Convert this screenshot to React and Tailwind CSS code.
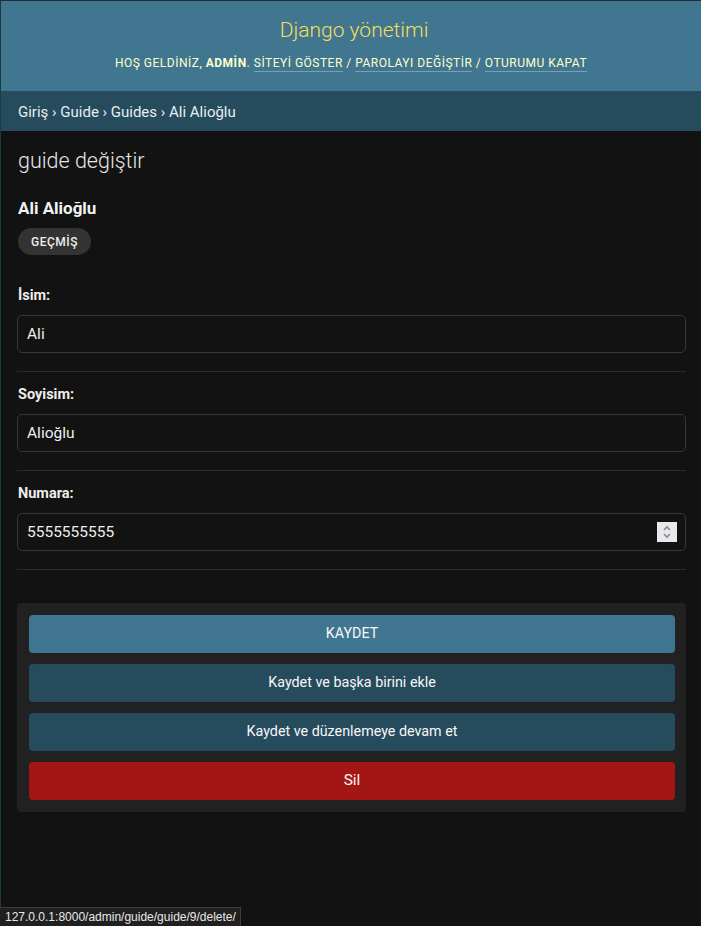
import { useState } from 'react';

const fields = [
  { label: 'İsim:', value: 'Ali' },
  { label: 'Soyisim:', value: 'Alioğlu' },
  { label: 'Numara:', value: '5555555555', number: true },
];

function Spinner() {
  return (
    <span className="absolute right-[9px] top-[9px] flex h-[20px] w-[20px] flex-col items-center justify-center bg-[#e9e9ed]">
      <svg width="10" height="16" viewBox="0 0 10 16" fill="none" stroke="#8a8a8a" strokeWidth="1.6">
        <path d="M2 6 L5 3 L8 6" />
        <path d="M2 10 L5 13 L8 10" />
      </svg>
    </span>
  );
}

function Field({ label, value, number }) {
  const [val, setVal] = useState(value);
  return (
    <div className="border-b border-[#2a2a2a] pt-[14px] pb-[18px]">
      <label className="block pl-[1px] text-[14.5px] font-bold leading-[17px] text-[#eeeeee]">{label}</label>
      <div className="relative mt-[11px]">
        <input
          value={val}
          onChange={(e) => setVal(e.target.value)}
          className="block h-[38px] w-full rounded-[5px] border border-[#363636] bg-[#121212] px-[9px] text-[15.5px] text-[#eeeeee] outline-none"
        />
        {number && <Spinner />}
      </div>
    </div>
  );
}

export default function App() {
  return (
    <div
      className="min-h-[926px] w-full border-l border-[#1d3a40] bg-[#121212] text-[#eeeeee]"
      style={{ fontFamily: 'Roboto, "Liberation Sans", sans-serif' }}
    >
      {/* Header */}
      <header className="flex h-[91px] flex-col items-center border-t border-[#1c2d36] bg-[#417690] pt-[16px]">
        <div className="pl-[6px] text-[21px] font-light leading-[26px] text-[#f5dd5d]">Django yönetimi</div>
        <div className="mt-[12px] text-[12px] tracking-[0.5px] leading-[16px] text-[#ffffcc]">
          HOŞ GELDİNİZ, <strong className="font-bold">ADMİN</strong>.{' '}
          <a className="border-b border-white/30 pb-[1px]">SİTEYİ GÖSTER</a> /{' '}
          <a className="border-b border-white/30 pb-[1px]">PAROLAYI DEĞİŞTİR</a> /{' '}
          <a className="border-b border-white/30 pb-[1px]">OTURUMU KAPAT</a>
        </div>
      </header>

      {/* Breadcrumbs */}
      <nav className="flex h-[40px] items-center bg-[#264b5d] px-[17px] pt-[2px] text-[15px] text-[#e6eef2]">
        Giriş › Guide › Guides › Ali Alioğlu
      </nav>

      {/* Content */}
      <main className="pl-[16px] pr-[15px] pt-[17px]">
        <div className="pl-[1px]">
          <h1 className="text-[21.5px] font-light leading-[26px] text-[#e6e6e6]">guide değiştir</h1>
          <h2 className="mt-[24px] text-[17px] font-bold leading-[20px] text-[#f2f2f2]">Ali Alioğlu</h2>
          <button className="mt-[10px] h-[27px] rounded-full bg-[#333333] px-[13px] text-[12px] font-medium tracking-[0.5px] text-[#eeeeee]">
            GEÇMİŞ
          </button>
        </div>

        <div className="mt-[18px]">
          {fields.map((f) => (
            <Field key={f.label} {...f} />
          ))}
        </div>

        {/* Submit row */}
        <div className="mt-[33px] flex flex-col gap-[11px] rounded-[4px] bg-[#212121] pt-[12px] pb-[12px] pl-[12px] pr-[11px]">
          <button className="h-[38px] rounded-[4px] bg-[#417690] text-[14.3px] text-[#f7f7f7]">KAYDET</button>
          <button className="h-[38px] rounded-[4px] bg-[#264b5d] text-[14.3px] text-[#f7f7f7]">Kaydet ve başka birini ekle</button>
          <button className="h-[38px] rounded-[4px] bg-[#264b5d] text-[14.3px] text-[#f7f7f7]">Kaydet ve düzenlemeye devam et</button>
          <button className="h-[38px] rounded-[4px] bg-[#a41515] text-[15.5px] text-[#f7f7f7]">Sil</button>
        </div>
      </main>

      {/* Browser status bar */}
      <div
        className="fixed bottom-0 left-0 h-[19px] border-t border-r border-[#3c3c3c] bg-[#202020] pl-[5px] pr-[4px] text-[12px] leading-[18px] text-[#e8e8e8]"
        style={{ fontFamily: '"Liberation Sans", Arial, sans-serif' }}
      >
        127.0.0.1:8000/admin/guide/guide/9/delete/
      </div>
    </div>
  );
}
